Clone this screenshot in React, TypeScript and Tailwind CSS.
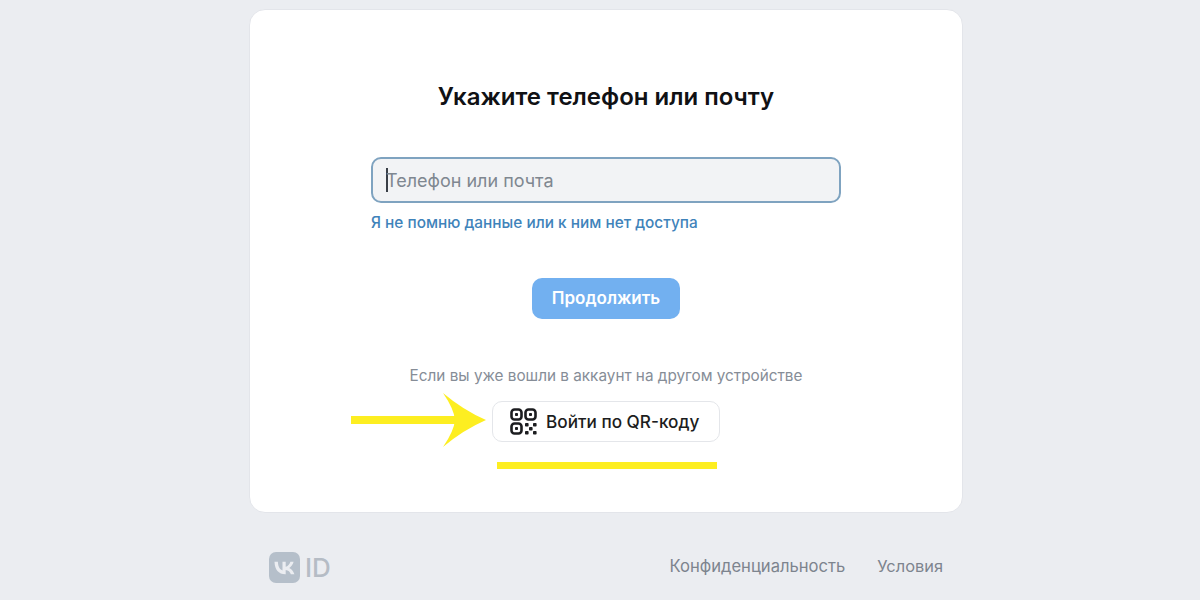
const FONT = "font-['Inter','Noto_Sans',sans-serif]";

function QrIcon() {
  return (
    <svg width="27" height="27" viewBox="0 0 27 27" fill="none" stroke="#1c1d20" strokeWidth="2.6">
      <rect x="1.5" y="1.5" width="10" height="10" rx="3" />
      <rect x="15.5" y="1.5" width="10" height="10" rx="3" />
      <rect x="1.5" y="15.5" width="10" height="10" rx="3" />
      <g fill="#1c1d20" stroke="none">
        <rect x="5" y="5" width="3" height="3" rx="0.8" />
        <rect x="19" y="5" width="3" height="3" rx="0.8" />
        <rect x="5" y="19" width="3" height="3" rx="0.8" />
        <rect x="15" y="15" width="3.6" height="3.6" rx="0.8" />
        <rect x="23" y="15" width="3.6" height="3.6" rx="0.8" />
        <rect x="19" y="19" width="3.6" height="3.6" rx="0.8" />
        <rect x="15" y="23" width="3.6" height="3.6" rx="0.8" />
        <rect x="23" y="23" width="3.6" height="3.6" rx="0.8" />
      </g>
    </svg>
  );
}

function VkLogo() {
  return (
    <svg width="31" height="31" viewBox="0 0 31 31">
      <rect width="31" height="31" rx="7" fill="#b5bfca" />
      <path
        d="M16.4 22.3C9.6 22.3 5.7 17.6 5.5 9.8h3.4c.1 5.7 2.6 8.1 4.6 8.6V9.8h3.2v4.9c2-.2 4-2.4 4.7-4.9h3.2c-.5 3-2.8 5.2-4.4 6.1 1.6.7 4.2 2.7 5.2 6.4h-3.5c-.8-2.4-2.6-4.2-5.2-4.4v4.4h-.3z"
        fill="#ebedf1"
      />
    </svg>
  );
}

export default function App() {
  return (
    <div className={`relative h-[600px] w-[1200px] overflow-hidden bg-[#ebedf1] ${FONT}`}>
      <div className="ml-[249px] w-[714px] pt-[9px]">
        {/* Card */}
        <div className="relative flex h-[504px] flex-col items-center rounded-2xl border border-[#e3e5ea] bg-white pt-[71px]">
          <h1 className="text-[24px] leading-[32px] font-semibold text-[#101114]">
            Укажите телефон или почту
          </h1>

          <div className="mt-[44px] flex h-[46px] w-[470px] items-center rounded-[10px] border-2 border-[#7fa3c0] bg-[#f2f3f5] pl-[13px]">
            <span className="h-[24px] w-[2px] bg-[#3a3f47]" />
            <span className="-ml-[2px] text-[18px] text-[#7f8790]">Телефон или почта</span>
          </div>
          <a className="mt-[9px] w-[470px] text-[15.4px] leading-[22px] font-medium text-[#3f83ba]">
            Я не помню данные или к ним нет доступа
          </a>

          <button className="mt-[44px] flex h-[41px] w-[148px] items-center justify-center rounded-[10px] bg-[#72b0f0] text-[17px] font-semibold text-white">
            Продолжить
          </button>

          <p className="mt-[46px] text-[15.3px] leading-[22px] text-[#868d97]">
            Если вы уже вошли в аккаунт на другом устройстве
          </p>

          <button className="mt-[14px] flex h-[41px] w-[228px] items-center gap-[9px] rounded-[10px] border border-[#e4e6ea] bg-white pl-[17px] text-[17.2px] font-medium text-[#1c1d20]">
            <QrIcon />
            Войти по QR-коду
          </button>

          {/* Yellow annotations */}
          <svg className="absolute top-[383px] left-[100px]" width="137" height="54" viewBox="0 0 137 54">
            <path d="M1 23h108v8H1z" fill="#fdee21" />
            <path d="M93 0Q113 17 136 27Q113 37 93 54Q104 38 105 27Q104 16 93 0z" fill="#fdee21" />
          </svg>
          <div className="absolute top-[452px] left-[247px] h-[7px] w-[220px] bg-[#fdee21]" />
        </div>

        {/* Footer */}
        <div className="mt-[39px] flex items-center pl-[20px]">
          <VkLogo />
          <span className="ml-[5px] text-[26px] leading-[31px] font-medium text-[#b5bcc5]">ID</span>
          <span className="-mt-[2px] ml-auto text-[16.6px] text-[#7d848e]">Конфиденциальность</span>
          <span className="-mt-[2px] mr-[20px] ml-[32px] text-[16.4px] text-[#7d848e]">Условия</span>
        </div>
      </div>
    </div>
  );
}
